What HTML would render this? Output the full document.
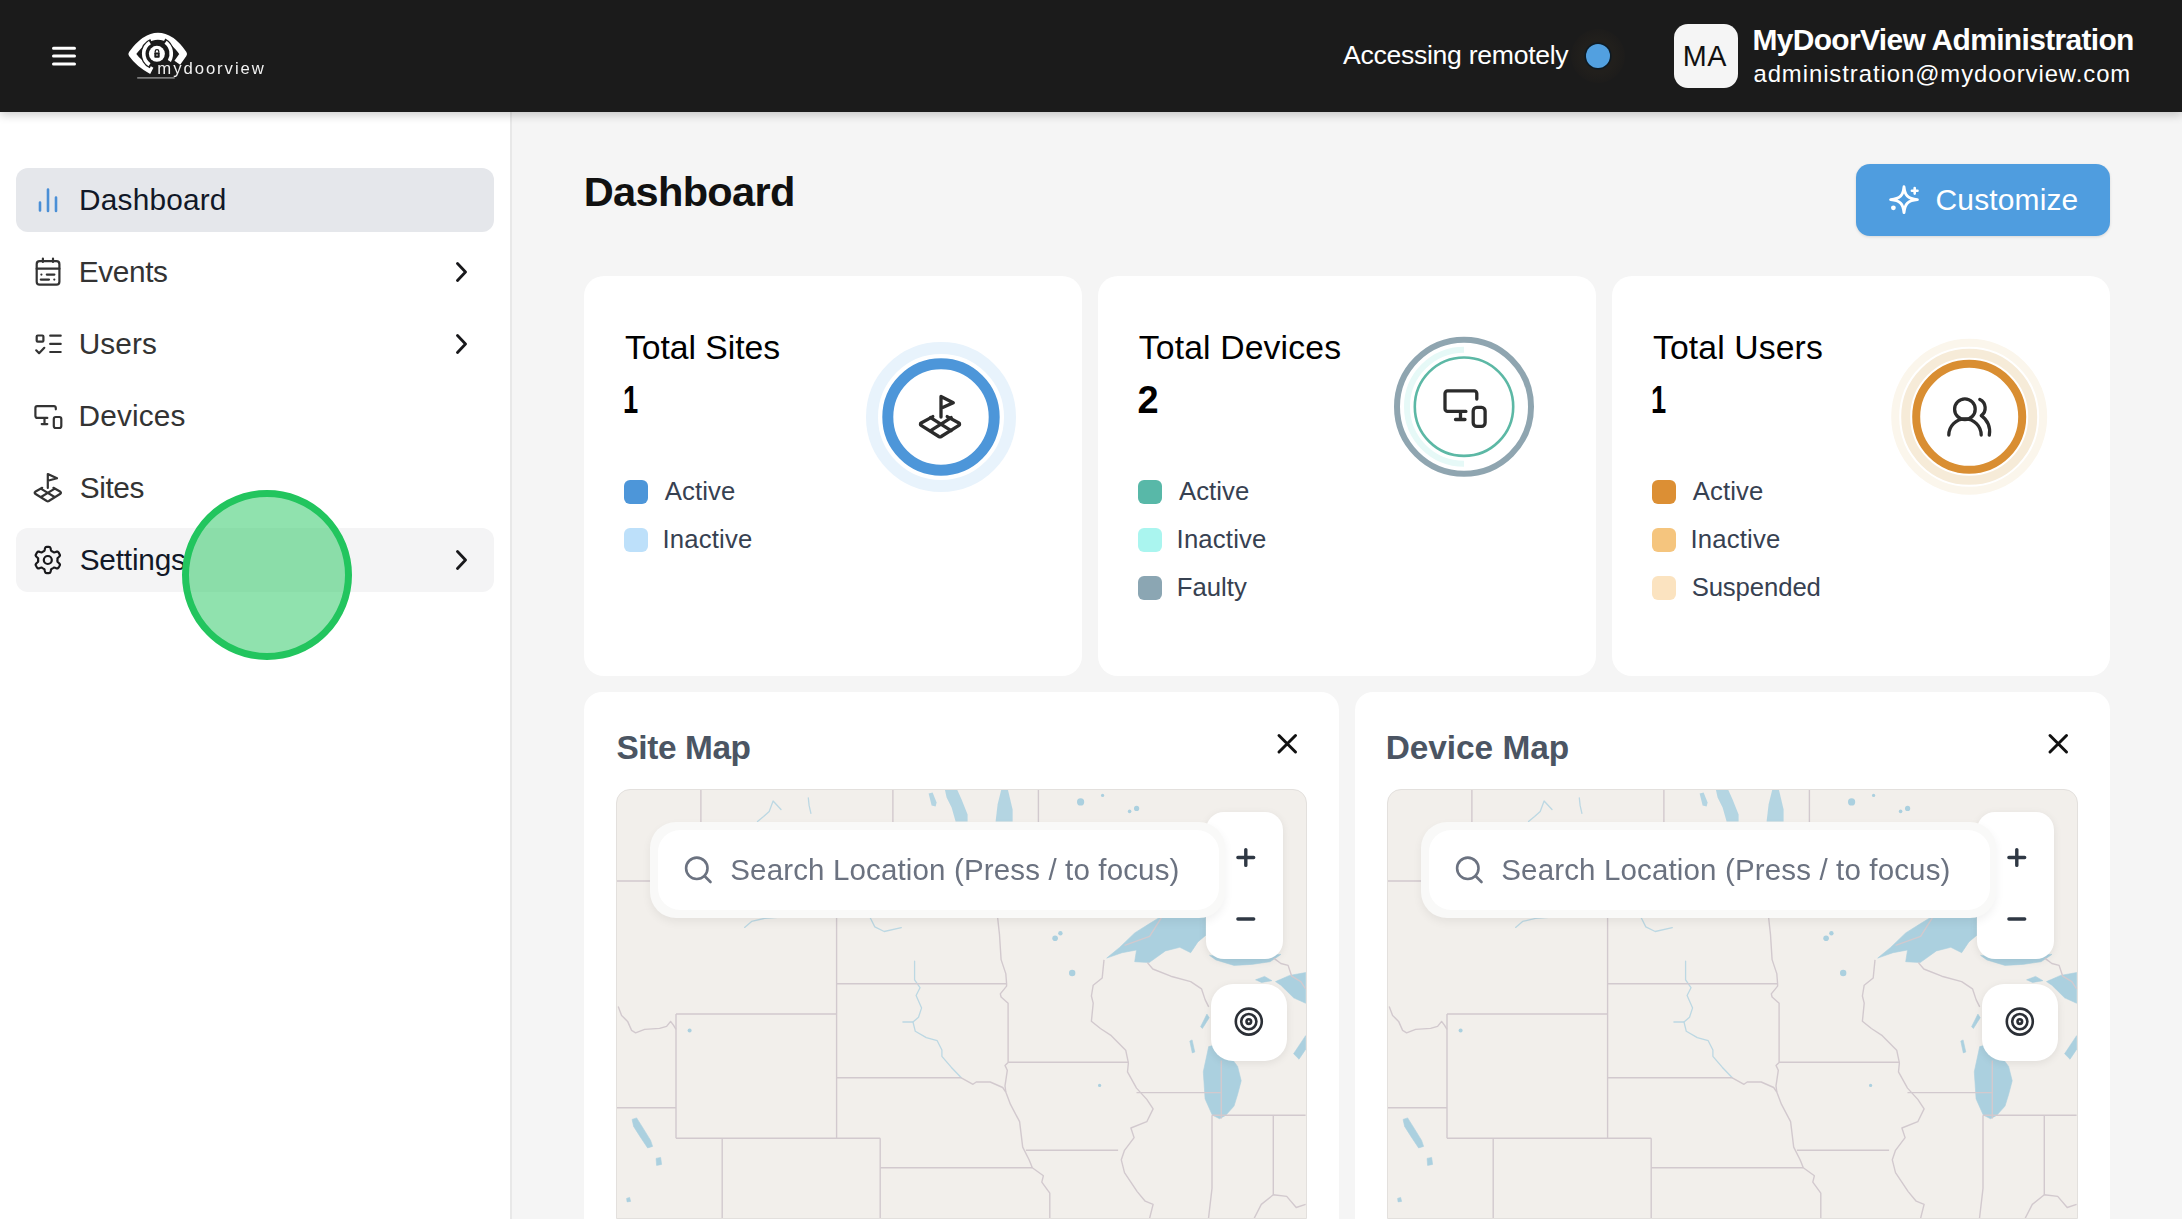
<!DOCTYPE html><html><head><meta charset="utf-8"><title>MyDoorView Dashboard</title><style>
*{margin:0;padding:0;box-sizing:border-box}
html,body{width:2182px;height:1219px;overflow:hidden;background:#f5f5f5;font-family:"Liberation Sans",sans-serif}
.t{position:absolute;white-space:nowrap;line-height:1}
.a{position:absolute}
svg.a{overflow:visible}
</style></head><body>
<div class="a" style="left:0;top:112px;width:512px;height:1107px;background:#fff;border-right:2px solid #e8e8e8"></div>
<div class="a" style="left:16px;top:168px;width:478px;height:64px;background:#e5e7eb;border-radius:12px"></div>
<div class="a" style="left:16px;top:528px;width:478px;height:64px;background:#f4f4f5;border-radius:12px"></div>
<div class="t" style="left:79.12px;top:184.77px;font-size:29.80px;color:#111827;letter-spacing:0.183px;">Dashboard</div>
<div class="t" style="left:78.82px;top:256.97px;font-size:29.80px;color:#333333;letter-spacing:-0.400px;">Events</div>
<div class="t" style="left:78.77px;top:328.57px;font-size:29.80px;color:#333333;letter-spacing:0.077px;">Users</div>
<div class="t" style="left:78.62px;top:400.57px;font-size:29.80px;color:#333333;letter-spacing:0.150px;">Devices</div>
<div class="t" style="left:79.66px;top:472.57px;font-size:29.80px;color:#333333;letter-spacing:-0.378px;">Sites</div>
<div class="t" style="left:79.66px;top:544.57px;font-size:29.80px;color:#111827;letter-spacing:-0.190px;">Settings</div>
<svg class="a" style="left:0;top:0" width="510" height="640" viewBox="0 0 510 640" fill="none" stroke-linecap="round" stroke-linejoin="round">
<g stroke="#4a8fd6" stroke-width="2.6"><path d="M40 202.5v8M48 189.5v21.5M56 197.5v13.5"/></g>
<g stroke="#333333" stroke-width="2.2">
<rect x="36.7" y="261.2" width="22.7" height="23.5" rx="3"/><path d="M42.9 258.6v3.4M53 258.6v3.4M36.7 268.7h22.7M41.4 274.6h.01M46.8 274.6h7.6M40.8 279.6h8.2M54.3 279.6h.01"/>
<rect x="36.7" y="335.5" width="6.7" height="6.2" rx="1"/><path d="M36.2 350.3l2.9 2.9l5.2-5.4M50.2 335.7h10.5M50.2 343.9h10.5M50.2 352h10.5"/>
<path d="M55.8 409.3v-1.4a1.8 1.8 0 0 0 -1.8 -1.8h-16.8a1.8 1.8 0 0 0 -1.8 1.8v8.2a1.8 1.8 0 0 0 1.8 1.8h10.1M44.5 417.9v6.2M41.7 424.1h5.6"/><rect x="53.8" y="417" width="7.5" height="11" rx="2"/>
<path d="M47.8 488v-14l9.2 4.3l-9.2 2.4M42.2 487.8l-7 4a1.2 1.2 0 0 0 0 2l11.6 7.2a2 2 0 0 0 2 0l11.6-7.2a1.2 1.2 0 0 0 0-2l-7-4M40.8 488.6l14.2 8.6M54.8 488.6l-14.2 8.6"/>
<path d="M57.50 560.00L57.49 560.42L57.46 560.85L57.42 561.27L57.53 561.71L58.04 562.27L58.81 562.95L59.54 563.70L59.95 564.42L59.90 565.01L59.67 565.54L59.42 566.05L59.14 566.55L58.85 567.04L58.53 567.51L58.19 567.97L57.70 568.31L56.88 568.32L55.86 568.06L54.89 567.73L54.15 567.56L53.70 567.70L53.36 567.95L53.01 568.18L52.65 568.40L52.28 568.60L51.90 568.79L51.51 568.96L51.18 569.28L50.95 570.00L50.75 571.01L50.46 572.02L50.04 572.73L49.51 572.99L48.94 573.05L48.37 573.09L47.80 573.10L47.23 573.09L46.66 573.05L46.09 572.99L45.56 572.73L45.14 572.02L44.85 571.01L44.65 570.00L44.42 569.28L44.09 568.96L43.70 568.79L43.32 568.60L42.95 568.40L42.59 568.18L42.24 567.95L41.90 567.70L41.45 567.56L40.71 567.73L39.74 568.06L38.72 568.32L37.90 568.31L37.41 567.97L37.07 567.51L36.75 567.04L36.46 566.55L36.18 566.05L35.93 565.54L35.70 565.01L35.65 564.42L36.06 563.70L36.79 562.95L37.56 562.27L38.07 561.71L38.18 561.27L38.14 560.85L38.11 560.42L38.10 560.00L38.11 559.58L38.14 559.15L38.18 558.73L38.07 558.29L37.56 557.73L36.79 557.05L36.06 556.30L35.65 555.58L35.70 554.99L35.93 554.46L36.18 553.95L36.46 553.45L36.75 552.96L37.07 552.49L37.41 552.03L37.90 551.69L38.72 551.68L39.74 551.94L40.71 552.27L41.45 552.44L41.90 552.30L42.24 552.05L42.59 551.82L42.95 551.60L43.32 551.40L43.70 551.21L44.09 551.04L44.42 550.72L44.65 550.00L44.85 548.99L45.14 547.98L45.56 547.27L46.09 547.01L46.66 546.95L47.23 546.91L47.80 546.90L48.37 546.91L48.94 546.95L49.51 547.01L50.04 547.27L50.46 547.98L50.75 548.99L50.95 550.00L51.18 550.72L51.51 551.04L51.90 551.21L52.28 551.40L52.65 551.60L53.01 551.82L53.36 552.05L53.70 552.30L54.15 552.44L54.89 552.27L55.86 551.94L56.88 551.68L57.70 551.69L58.19 552.03L58.53 552.49L58.85 552.96L59.14 553.45L59.42 553.95L59.67 554.46L59.90 554.99L59.95 555.58L59.54 556.30L58.81 557.05L58.04 557.73L57.53 558.29L57.42 558.73L57.46 559.15L57.49 559.58z" stroke="#18181b"/><circle cx="47.8" cy="560" r="4" stroke="#18181b"/>
</g>
<g stroke="#18181b" stroke-width="2.8"><path d="M457.5 263.5l8 8.5l-8 8.5M457.5 335.5l8 8.5l-8 8.5M457.5 551.5l8 8.5l-8 8.5"/></g>
</svg>
<div class="t" style="left:583.80px;top:171.10px;font-size:41.57px;color:#111;font-weight:700;letter-spacing:-0.699px;">Dashboard</div>
<div class="a" style="left:1856px;top:164px;width:254px;height:72px;border-radius:14px;background:#4f9ddf;box-shadow:0 1px 3px rgba(0,0,0,0.12)"></div>
<svg class="a" style="left:1880px;top:180px" width="44" height="40" viewBox="1880 180 44 40" fill="none" stroke="#fff" stroke-width="2.2" stroke-linecap="round" stroke-linejoin="round">
<path d="M1904 186.8C1904.9 195.2 1907.5 198.8 1917.4 199.6C1907.5 200.4 1904.9 204 1904 212.6C1903.1 204 1900.5 200.4 1890.6 199.6C1900.5 198.8 1903.1 195.2 1904 186.8z" stroke-width="2.9"/><path d="M1914.7 188v5.6M1911.9 190.8h5.6" stroke-width="2.6"/><circle cx="1893.4" cy="207.8" r="1.4" fill="#fff" stroke-width="2"/></svg>
<div class="t" style="left:1935.60px;top:184.85px;font-size:29.94px;color:#fff;letter-spacing:0.152px;">Customize</div>
<div class="a" style="left:584px;top:276px;width:498px;height:400px;border-radius:20px;background:#fff"></div>
<div class="a" style="left:1098px;top:276px;width:498px;height:400px;border-radius:20px;background:#fff"></div>
<div class="a" style="left:1612px;top:276px;width:498px;height:400px;border-radius:20px;background:#fff"></div>
<div class="t" style="left:624.93px;top:331.05px;font-size:33.72px;color:#000;letter-spacing:-0.027px;">Total Sites</div>
<div class="t" style="left:622.72px;top:382.18px;font-size:37.94px;color:#000;font-weight:700;transform:scaleX(0.72);transform-origin:0 0;">1</div>
<div class="t" style="left:1138.73px;top:331.05px;font-size:33.72px;color:#000;letter-spacing:0.149px;">Total Devices</div>
<div class="t" style="left:1137.57px;top:382.18px;font-size:37.94px;color:#000;font-weight:700;">2</div>
<div class="t" style="left:1652.93px;top:331.05px;font-size:33.72px;color:#000;letter-spacing:0.125px;">Total Users</div>
<div class="t" style="left:1650.72px;top:382.18px;font-size:37.94px;color:#000;font-weight:700;transform:scaleX(0.72);transform-origin:0 0;">1</div>
<div class="a" style="left:624px;top:480px;width:24px;height:24px;border-radius:6px;background:#4d96d9"></div>
<div class="t" style="left:664.80px;top:478.92px;font-size:25.73px;color:#374151;letter-spacing:0.090px;">Active</div>
<div class="a" style="left:624px;top:528px;width:24px;height:24px;border-radius:6px;background:#bde0fa"></div>
<div class="t" style="left:662.48px;top:526.92px;font-size:25.73px;color:#374151;letter-spacing:0.159px;">Inactive</div>
<div class="a" style="left:1138.3px;top:480px;width:24px;height:24px;border-radius:6px;background:#58b8a8"></div>
<div class="t" style="left:1178.90px;top:478.92px;font-size:25.73px;color:#374151;letter-spacing:0.090px;">Active</div>
<div class="a" style="left:1138.3px;top:528px;width:24px;height:24px;border-radius:6px;background:#aaf5ef"></div>
<div class="t" style="left:1176.58px;top:526.92px;font-size:25.73px;color:#374151;letter-spacing:0.159px;">Inactive</div>
<div class="a" style="left:1138.3px;top:576px;width:24px;height:24px;border-radius:6px;background:#8ba6b3"></div>
<div class="t" style="left:1176.84px;top:574.92px;font-size:25.73px;color:#374151;letter-spacing:-0.009px;">Faulty</div>
<div class="a" style="left:1652.2px;top:480px;width:24px;height:24px;border-radius:6px;background:#dc8f34"></div>
<div class="t" style="left:1692.80px;top:478.92px;font-size:25.73px;color:#374151;letter-spacing:0.090px;">Active</div>
<div class="a" style="left:1652.2px;top:528px;width:24px;height:24px;border-radius:6px;background:#f5c57e"></div>
<div class="t" style="left:1690.48px;top:526.92px;font-size:25.73px;color:#374151;letter-spacing:0.159px;">Inactive</div>
<div class="a" style="left:1652.2px;top:576px;width:24px;height:24px;border-radius:6px;background:#fbe3c0"></div>
<div class="t" style="left:1691.64px;top:574.92px;font-size:25.73px;color:#374151;letter-spacing:-0.110px;">Suspended</div>
<svg class="a" style="left:0;top:0" width="2182" height="700" viewBox="0 0 2182 700" fill="none" stroke-linecap="round" stroke-linejoin="round">
<circle cx="941" cy="417" r="69" stroke="#e8f3fc" stroke-width="12"/>
<circle cx="941" cy="417" r="53.2" stroke="#4d96d9" stroke-width="11"/>
<circle cx="1464" cy="406.7" r="67" stroke="#8fa5b0" stroke-width="6"/>
<path d="M1464 349.7a57 57 0 0 0 0 114" stroke="#e6f9f7" stroke-width="6" stroke-linecap="butt"/>
<circle cx="1464" cy="406.7" r="49.2" stroke="#5cb8a5" stroke-width="2.6"/>
<circle cx="1969.2" cy="416.8" r="74" stroke="#fbf6ec" stroke-width="8"/>
<circle cx="1969.2" cy="416.8" r="63.5" stroke="#f6ebd8" stroke-width="9"/>
<circle cx="1969.2" cy="416.8" r="53" stroke="#d98e32" stroke-width="8"/>
<g stroke="#2b2b2b" stroke-width="3.3">
<path d="M941 417v-20.5l12.3 6.2l-12.3 5.6"/>
<path d="M932.8 416.6l-11.7 6.4a1.4 1.4 0 0 0 0 2.4l17.7 11.1a2.4 2.4 0 0 0 2.4 0l17.7-11.1a1.4 1.4 0 0 0 0-2.4l-11.7-6.4"/>
<path d="M930.6 417.6l20.5 13M951.2 417.6l-20.5 13"/>
<path d="M1476.8 399v-5.5a2.6 2.6 0 0 0-2.6-2.6h-26.6a2.6 2.6 0 0 0-2.6 2.6v15.3a2.6 2.6 0 0 0 2.6 2.6h18.3M1460.5 411.4v8.1M1455.5 419.5h9.5"/>
<rect x="1473.2" y="407.3" width="11.9" height="19.1" rx="3.6"/>
<circle cx="1964.9" cy="409.2" r="10.3"/>
<path d="M1948.8 435a16.2 16.2 0 0 1 32.4 0"/>
<path d="M1979.8 399.5a9.5 9.5 0 0 1 1.5 16.2a19 19 0 0 1 8 19.5"/>
</g></svg>
<div class="a" style="left:584px;top:692px;width:755px;height:527px;border-radius:18px 18px 0 0;background:#fff"></div>
<div class="a" style="left:1355px;top:692px;width:755px;height:527px;border-radius:18px 18px 0 0;background:#fff"></div>
<div class="t" style="left:616.50px;top:730.69px;font-size:33.43px;color:#4b5563;font-weight:700;letter-spacing:-0.423px;">Site Map</div>
<div class="t" style="left:1385.63px;top:730.69px;font-size:33.43px;color:#4b5563;font-weight:700;letter-spacing:-0.040px;">Device Map</div>
<div class="a" style="left:616.4px;top:788.6px;width:690.6px;height:430.4px;border-radius:14px 14px 0 0;overflow:hidden;background:#f2efeb;border:1.5px solid #e3e0dd"><svg class="a" style="left:-1.5px;top:-1.5px" width="692" height="460" viewBox="616.4 788.6 692 460"><g fill="#abd0df" stroke="#abd0df" stroke-width="0.6" stroke-linejoin="round"><path d="M1107.1 958.7L1120.0 948.0L1135.1 933.5L1149.6 924.4L1160.0 918.0L1206.0 918.0L1206.0 936.0L1198.3 942.5L1191.1 953.3L1180.2 947.9L1165.8 951.5L1149.6 963.2L1135.1 962.3L1136.9 950.6L1122.5 953.3z"/><path d="M1210.0 956.0L1216.3 960.5L1234.4 966.0L1252.0 965.0L1270.5 962.3L1281.3 955.0L1270.0 955.0L1240.0 958.0z"/><path d="M1256.0 980.4L1265.0 977.0L1272.3 981.3L1262.0 983.0z"/><path d="M1275.9 982.2L1290.0 976.0L1306.0 973.2L1306.0 1003.8L1294.0 998.4L1281.3 985.8z"/><path d="M1306.0 1036.3L1294.0 1054.4L1299.4 1059.8L1306.0 1050.0z"/><path d="M1201.0 1027.3L1207.3 1014.7L1209.6 1018.3L1202.8 1029.1z"/><path d="M1190.2 1041.7L1192.5 1040.5L1195.2 1052.6L1192.7 1053.5z"/><path d="M1209.1 1047.2L1214.0 1046.0L1232.6 1059.8L1238.0 1067.0L1241.6 1081.4L1238.0 1095.0L1234.4 1106.7L1226.0 1116.0L1219.9 1119.3L1212.7 1115.7L1205.5 1099.5L1203.7 1072.4z"/><path d="M632.5 1120.0L637.0 1118.5L643.0 1128.0L651.0 1141.0L653.0 1147.0L648.0 1148.5L641.0 1138.0L634.0 1127.0z"/><path d="M656.5 1159.0L661.0 1158.0L662.0 1165.0L657.0 1166.0z"/><path d="M627.0 1199.0L630.0 1198.0L631.0 1202.0L627.5 1202.5z"/></g><g fill="#abd0df"><circle cx="1055.5" cy="938.8" r="2.8"/><circle cx="1060.8" cy="933.8" r="2.2"/><circle cx="1072.6" cy="973.6" r="3.2"/><circle cx="1081" cy="802.5" r="3.6"/><circle cx="1137" cy="809" r="2.6"/><circle cx="1130" cy="812" r="1.8"/><circle cx="1103" cy="796" r="1.6"/><circle cx="690" cy="1031" r="2"/><circle cx="1100" cy="1086" r="1.6"/></g><g fill="#b4d5e2" stroke="none"><path d="M929.0 794.0L933.0 793.0L937.0 803.0L936.0 807.0L932.0 806.0z"/><path d="M945.0 789.0L957.0 789.0L962.0 800.0L968.0 815.0L968.0 822.0L956.0 822.0L952.0 808.0L947.0 798.0z"/><path d="M1002.0 789.0L1008.0 789.0L1013.0 810.0L1013.0 822.0L996.0 822.0L998.0 805.0z"/></g><g fill="none" stroke="#bcd8e3" stroke-width="1.3" stroke-linecap="round" stroke-linejoin="round"><path d="M915.0 961.8L915.0 980.5L920.4 988.3L916.5 996.1L922.0 1008.5L918.9 1017.9L913.4 1022.6L915.7 1031.9L926.7 1038.2L937.6 1041.3L942.3 1050.6L942.3 1056.9L951.6 1067.8L961.7 1078.4"/><path d="M903.3 1022.6L913.4 1022.6"/><path d="M870.5 918.1L875.2 927.5L884.6 932.1L901.7 928.3"/><path d="M745.0 928.0L752.0 922.0L765.0 919.0L778.0 918.0"/><path d="M757.9 822.0L764.0 817.0L769.6 812.0L773.5 801.6L781.4 810.1"/><path d="M808.7 798.4L809.5 806.0L811.3 814.0"/></g><g fill="none" stroke="#d2c9ce" stroke-width="1.4" stroke-linejoin="round"><path d="M701.3 789.0L701.3 870.0"/><path d="M893.3 789.0L893.3 870.0"/><path d="M616.0 881.6L660.0 881.6"/><path d="M1038.8 789.0L1038.8 870.0"/><path d="M837.0 880.0L837.0 1138.8"/><path d="M676.4 1014.6L837.0 1014.6"/><path d="M676.4 1014.6L676.4 1138.8"/><path d="M676.4 1138.8L880.6 1138.8"/><path d="M618.6 1007.0L622.0 1016.0L628.0 1022.0L632.0 1031.0L636.0 1033.5L645.0 1030.0L660.0 1029.0L667.0 1027.0L671.0 1022.0L674.0 1026.0L676.4 1030.0"/><path d="M616.0 1108.3L676.4 1108.3"/><path d="M722.6 1138.8L722.6 1230.0"/><path d="M880.6 1138.8L880.6 1230.0"/><path d="M837.0 984.4L1007.0 984.4"/><path d="M837.0 1078.4L961.7 1078.4"/><path d="M880.6 1168.4L1032.7 1168.4"/><path d="M996.0 900.0L999.9 935.3L1001.5 960.2L1006.2 974.2L1007.0 984.4L1007.0 986.7L1000.7 994.5L1001.5 997.6L1008.5 1003.9L1008.5 1063.1L1005.4 1066.0L1007.7 1070.9L1005.4 1086.5L1006.2 1092.7"/><path d="M961.7 1078.4L973.4 1084.9L976.6 1082.6L990.6 1082.6L1003.1 1088.1L1006.2 1092.7"/><path d="M1006.2 1092.7L1010.9 1105.0L1020.0 1122.3L1023.1 1147.7L1029.5 1160.4L1032.7 1168.4L1043.8 1176.3L1042.2 1182.7L1050.2 1193.8L1050.2 1230.0"/><path d="M1026.3 1150.9L1118.5 1150.9"/><path d="M1008.5 1062.8L1128.8 1062.8"/><path d="M1104.4 960.5L1102.6 978.6L1093.6 985.8L1091.8 996.6L1093.6 1003.8L1091.8 1021.9L1100.8 1029.1L1111.7 1036.3L1126.1 1050.8L1128.8 1063.4L1127.9 1072.4L1136.9 1088.7L1147.2 1100.0L1153.5 1109.5L1147.2 1122.3L1131.3 1128.6L1134.5 1138.2L1124.9 1150.9L1121.7 1160.4L1124.9 1173.2L1137.6 1192.2L1145.6 1201.8L1153.5 1205.0L1147.2 1230.0"/><path d="M1136.9 1093.2L1221.7 1093.2"/><path d="M1212.4 1115.9L1212.4 1189.0L1207.6 1230.0"/><path d="M1212.4 1115.9L1306.0 1115.9"/><path d="M1273.7 1115.9L1273.7 1195.4"/><path d="M1248.9 1230.0L1261.7 1205.0L1273.7 1195.4L1287.1 1197.0L1296.6 1208.1L1306.0 1205.0"/><path d="M1147.8 963.2L1153.2 969.6L1171.2 976.8L1191.1 982.2L1201.9 989.4L1205.5 1000.2L1209.1 1007.5"/><path d="M1274.1 958.7L1281.3 964.1L1288.5 966.0L1292.1 976.8L1301.2 982.2L1306.0 989.4"/><path d="M1221.7 1061.0L1221.7 1119.0"/><path d="M1125.0 946.0L1150.0 937.0L1162.0 918.0"/></g></svg></div>
<div class="a" style="left:650px;top:822px;width:575px;height:96px;border-radius:26px;background:#f9f9f8;box-shadow:0 4px 10px rgba(0,0,0,0.06);z-index:2"></div>
<div class="a" style="left:657.6px;top:830px;width:561px;height:80px;border-radius:22px;background:#fff;z-index:2"></div>
<svg class="a" style="left:0px;top:0;z-index:3" width="1400" height="1219" viewBox="0 0 1400 1219" fill="none" stroke="#6b7280" stroke-width="2.6" stroke-linecap="round"><circle cx="696.8" cy="868.3" r="10.7"/><path d="M704.5 876l6 6"/></svg>
<div class="t" style="left:730.27px;top:854.82px;font-size:29.51px;color:#6b7280;letter-spacing:0.144px;z-index:3;">Search Location (Press / to focus)</div>
<div class="a" style="left:1205.6px;top:812px;width:77.4px;height:147px;border-radius:18px;background:#fff;box-shadow:0 2px 8px rgba(0,0,0,0.08);z-index:1"></div>
<div class="a" style="left:1210.9px;top:983.7px;width:76.2px;height:77px;border-radius:22px;background:#fff;box-shadow:0 2px 8px rgba(0,0,0,0.08);z-index:1"></div>
<svg class="a" style="left:0px;top:0;z-index:3" width="1400" height="1219" viewBox="0 0 1400 1219" fill="none" stroke-linecap="round">
<g stroke="#2f3844" stroke-width="3.4"><path d="M1245.8 849.6v15.8M1237.9 857.5h15.8M1237.9 919h15.8"/></g>
<g stroke="#2b2f36" stroke-width="2.6"><circle cx="1248.8" cy="1021.6" r="13"/><circle cx="1248.8" cy="1021.6" r="7.6"/><circle cx="1248.8" cy="1021.6" r="2.3"/></g>
<g stroke="#111" stroke-width="3"><path d="M1279 735.5l16.5 16.5M1295.5 735.5l-16.5 16.5"/></g>
</svg>
<div class="a" style="left:1387.4px;top:788.6px;width:690.6px;height:430.4px;border-radius:14px 14px 0 0;overflow:hidden;background:#f2efeb;border:1.5px solid #e3e0dd"><svg class="a" style="left:-1.5px;top:-1.5px" width="692" height="460" viewBox="616.4 788.6 692 460"><g fill="#abd0df" stroke="#abd0df" stroke-width="0.6" stroke-linejoin="round"><path d="M1107.1 958.7L1120.0 948.0L1135.1 933.5L1149.6 924.4L1160.0 918.0L1206.0 918.0L1206.0 936.0L1198.3 942.5L1191.1 953.3L1180.2 947.9L1165.8 951.5L1149.6 963.2L1135.1 962.3L1136.9 950.6L1122.5 953.3z"/><path d="M1210.0 956.0L1216.3 960.5L1234.4 966.0L1252.0 965.0L1270.5 962.3L1281.3 955.0L1270.0 955.0L1240.0 958.0z"/><path d="M1256.0 980.4L1265.0 977.0L1272.3 981.3L1262.0 983.0z"/><path d="M1275.9 982.2L1290.0 976.0L1306.0 973.2L1306.0 1003.8L1294.0 998.4L1281.3 985.8z"/><path d="M1306.0 1036.3L1294.0 1054.4L1299.4 1059.8L1306.0 1050.0z"/><path d="M1201.0 1027.3L1207.3 1014.7L1209.6 1018.3L1202.8 1029.1z"/><path d="M1190.2 1041.7L1192.5 1040.5L1195.2 1052.6L1192.7 1053.5z"/><path d="M1209.1 1047.2L1214.0 1046.0L1232.6 1059.8L1238.0 1067.0L1241.6 1081.4L1238.0 1095.0L1234.4 1106.7L1226.0 1116.0L1219.9 1119.3L1212.7 1115.7L1205.5 1099.5L1203.7 1072.4z"/><path d="M632.5 1120.0L637.0 1118.5L643.0 1128.0L651.0 1141.0L653.0 1147.0L648.0 1148.5L641.0 1138.0L634.0 1127.0z"/><path d="M656.5 1159.0L661.0 1158.0L662.0 1165.0L657.0 1166.0z"/><path d="M627.0 1199.0L630.0 1198.0L631.0 1202.0L627.5 1202.5z"/></g><g fill="#abd0df"><circle cx="1055.5" cy="938.8" r="2.8"/><circle cx="1060.8" cy="933.8" r="2.2"/><circle cx="1072.6" cy="973.6" r="3.2"/><circle cx="1081" cy="802.5" r="3.6"/><circle cx="1137" cy="809" r="2.6"/><circle cx="1130" cy="812" r="1.8"/><circle cx="1103" cy="796" r="1.6"/><circle cx="690" cy="1031" r="2"/><circle cx="1100" cy="1086" r="1.6"/></g><g fill="#b4d5e2" stroke="none"><path d="M929.0 794.0L933.0 793.0L937.0 803.0L936.0 807.0L932.0 806.0z"/><path d="M945.0 789.0L957.0 789.0L962.0 800.0L968.0 815.0L968.0 822.0L956.0 822.0L952.0 808.0L947.0 798.0z"/><path d="M1002.0 789.0L1008.0 789.0L1013.0 810.0L1013.0 822.0L996.0 822.0L998.0 805.0z"/></g><g fill="none" stroke="#bcd8e3" stroke-width="1.3" stroke-linecap="round" stroke-linejoin="round"><path d="M915.0 961.8L915.0 980.5L920.4 988.3L916.5 996.1L922.0 1008.5L918.9 1017.9L913.4 1022.6L915.7 1031.9L926.7 1038.2L937.6 1041.3L942.3 1050.6L942.3 1056.9L951.6 1067.8L961.7 1078.4"/><path d="M903.3 1022.6L913.4 1022.6"/><path d="M870.5 918.1L875.2 927.5L884.6 932.1L901.7 928.3"/><path d="M745.0 928.0L752.0 922.0L765.0 919.0L778.0 918.0"/><path d="M757.9 822.0L764.0 817.0L769.6 812.0L773.5 801.6L781.4 810.1"/><path d="M808.7 798.4L809.5 806.0L811.3 814.0"/></g><g fill="none" stroke="#d2c9ce" stroke-width="1.4" stroke-linejoin="round"><path d="M701.3 789.0L701.3 870.0"/><path d="M893.3 789.0L893.3 870.0"/><path d="M616.0 881.6L660.0 881.6"/><path d="M1038.8 789.0L1038.8 870.0"/><path d="M837.0 880.0L837.0 1138.8"/><path d="M676.4 1014.6L837.0 1014.6"/><path d="M676.4 1014.6L676.4 1138.8"/><path d="M676.4 1138.8L880.6 1138.8"/><path d="M618.6 1007.0L622.0 1016.0L628.0 1022.0L632.0 1031.0L636.0 1033.5L645.0 1030.0L660.0 1029.0L667.0 1027.0L671.0 1022.0L674.0 1026.0L676.4 1030.0"/><path d="M616.0 1108.3L676.4 1108.3"/><path d="M722.6 1138.8L722.6 1230.0"/><path d="M880.6 1138.8L880.6 1230.0"/><path d="M837.0 984.4L1007.0 984.4"/><path d="M837.0 1078.4L961.7 1078.4"/><path d="M880.6 1168.4L1032.7 1168.4"/><path d="M996.0 900.0L999.9 935.3L1001.5 960.2L1006.2 974.2L1007.0 984.4L1007.0 986.7L1000.7 994.5L1001.5 997.6L1008.5 1003.9L1008.5 1063.1L1005.4 1066.0L1007.7 1070.9L1005.4 1086.5L1006.2 1092.7"/><path d="M961.7 1078.4L973.4 1084.9L976.6 1082.6L990.6 1082.6L1003.1 1088.1L1006.2 1092.7"/><path d="M1006.2 1092.7L1010.9 1105.0L1020.0 1122.3L1023.1 1147.7L1029.5 1160.4L1032.7 1168.4L1043.8 1176.3L1042.2 1182.7L1050.2 1193.8L1050.2 1230.0"/><path d="M1026.3 1150.9L1118.5 1150.9"/><path d="M1008.5 1062.8L1128.8 1062.8"/><path d="M1104.4 960.5L1102.6 978.6L1093.6 985.8L1091.8 996.6L1093.6 1003.8L1091.8 1021.9L1100.8 1029.1L1111.7 1036.3L1126.1 1050.8L1128.8 1063.4L1127.9 1072.4L1136.9 1088.7L1147.2 1100.0L1153.5 1109.5L1147.2 1122.3L1131.3 1128.6L1134.5 1138.2L1124.9 1150.9L1121.7 1160.4L1124.9 1173.2L1137.6 1192.2L1145.6 1201.8L1153.5 1205.0L1147.2 1230.0"/><path d="M1136.9 1093.2L1221.7 1093.2"/><path d="M1212.4 1115.9L1212.4 1189.0L1207.6 1230.0"/><path d="M1212.4 1115.9L1306.0 1115.9"/><path d="M1273.7 1115.9L1273.7 1195.4"/><path d="M1248.9 1230.0L1261.7 1205.0L1273.7 1195.4L1287.1 1197.0L1296.6 1208.1L1306.0 1205.0"/><path d="M1147.8 963.2L1153.2 969.6L1171.2 976.8L1191.1 982.2L1201.9 989.4L1205.5 1000.2L1209.1 1007.5"/><path d="M1274.1 958.7L1281.3 964.1L1288.5 966.0L1292.1 976.8L1301.2 982.2L1306.0 989.4"/><path d="M1221.7 1061.0L1221.7 1119.0"/><path d="M1125.0 946.0L1150.0 937.0L1162.0 918.0"/></g></svg></div>
<div class="a" style="left:1421px;top:822px;width:575px;height:96px;border-radius:26px;background:#f9f9f8;box-shadow:0 4px 10px rgba(0,0,0,0.06);z-index:2"></div>
<div class="a" style="left:1428.6px;top:830px;width:561px;height:80px;border-radius:22px;background:#fff;z-index:2"></div>
<svg class="a" style="left:771px;top:0;z-index:3" width="1400" height="1219" viewBox="0 0 1400 1219" fill="none" stroke="#6b7280" stroke-width="2.6" stroke-linecap="round"><circle cx="696.8" cy="868.3" r="10.7"/><path d="M704.5 876l6 6"/></svg>
<div class="t" style="left:1501.27px;top:854.82px;font-size:29.51px;color:#6b7280;letter-spacing:0.144px;z-index:3;">Search Location (Press / to focus)</div>
<div class="a" style="left:1976.6px;top:812px;width:77.4px;height:147px;border-radius:18px;background:#fff;box-shadow:0 2px 8px rgba(0,0,0,0.08);z-index:1"></div>
<div class="a" style="left:1981.9px;top:983.7px;width:76.2px;height:77px;border-radius:22px;background:#fff;box-shadow:0 2px 8px rgba(0,0,0,0.08);z-index:1"></div>
<svg class="a" style="left:771px;top:0;z-index:3" width="1400" height="1219" viewBox="0 0 1400 1219" fill="none" stroke-linecap="round">
<g stroke="#2f3844" stroke-width="3.4"><path d="M1245.8 849.6v15.8M1237.9 857.5h15.8M1237.9 919h15.8"/></g>
<g stroke="#2b2f36" stroke-width="2.6"><circle cx="1248.8" cy="1021.6" r="13"/><circle cx="1248.8" cy="1021.6" r="7.6"/><circle cx="1248.8" cy="1021.6" r="2.3"/></g>
<g stroke="#111" stroke-width="3"><path d="M1279 735.5l16.5 16.5M1295.5 735.5l-16.5 16.5"/></g>
</svg>
<div class="a" style="left:0;top:0;width:2182px;height:112px;background:#1b1b1b;box-shadow:0 3px 9px rgba(0,0,0,0.2)"></div>
<svg class="a" style="left:0;top:0" width="300" height="112" viewBox="0 0 300 112"><g stroke="#fff" stroke-width="3" stroke-linecap="round"><path d="M53.5 48.2h21M53.5 56h21M53.5 63.9h21"/></g></svg>
<svg class="a" style="left:0;top:0" width="300" height="112" viewBox="0 0 300 112" fill="none">
<path d="M151.8 70.8C143.5 66.5 136.5 60.5 131.9 54C140 43 148 36.3 157.9 36.3C168 36.3 176 43 183.5 54L177.3 62.8" stroke="#fff" stroke-width="7" stroke-linejoin="round"/>
<path d="M151.53 41.74A13.2 13.2 0 0 0 151.11 65.66" stroke="#1b1b1b" stroke-width="6"/>
<path d="M163.88 41.21A14.4 14.4 0 0 1 168.25 62.67" stroke="#1b1b1b" stroke-width="6"/>
<path d="M149.91 42.61A13.2 13.2 0 0 0 149.52 64.74" stroke="#fff" stroke-width="3.6"/>
<path d="M165.57 42.30A14.4 14.4 0 0 1 169.37 61.00" stroke="#fff" stroke-width="3.6"/>
<circle cx="156.9" cy="53.8" r="8" fill="#fff"/>
<path d="M155.2 52.8v-1.3a1.8 1.8 0 0 1 3.6 0v1.3" stroke="#1b1b1b" stroke-width="1.3"/>
<rect x="154.3" y="52.4" width="5.4" height="5.3" rx="0.9" fill="#1b1b1b"/>
<path d="M157 54.2v1.8" stroke="#fff" stroke-width="0.9"/>
<path d="M137.2 77.8H174.7" stroke="#7a7a7a" stroke-width="1.8"/>
</svg>\n<div class="t" style="left:157.31px;top:60.56px;font-size:16.70px;color:#f2f2f2;letter-spacing:1.945px;transform:translateZ(0);">mydoorview</div>
<div class="t" style="left:1343.00px;top:42.18px;font-size:26.60px;color:#fff;letter-spacing:-0.289px;">Accessing remotely</div>
<div class="a" style="left:1571px;top:29px;width:54px;height:54px;border-radius:50%;background:radial-gradient(circle,#211f1c 0,#211f1c 45%,#1d1c1b 70%,rgba(27,27,27,0) 100%)"></div>
<div class="a" style="left:1586px;top:44px;width:24px;height:24px;border-radius:50%;background:#52a0e0;box-shadow:0 0 0 1.5px #0c1a24"></div>
<div class="a" style="left:1674px;top:24px;width:64px;height:64px;border-radius:14px;background:#f5f5f5"></div>
<div class="t" style="left:1682.70px;top:41.83px;font-size:28.78px;color:#111;letter-spacing:0.634px;">MA</div>
<div class="t" style="left:1752.45px;top:24.85px;font-size:29.94px;color:#fff;font-weight:700;letter-spacing:-0.649px;">MyDoorView Administration</div>
<div class="t" style="left:1753.45px;top:61.80px;font-size:23.86px;color:#fff;letter-spacing:0.942px;">administration@mydoorview.com</div>
<div class="a" style="left:181.5px;top:490px;width:170px;height:170px;border-radius:50%;background:rgba(34,197,94,0.5);border:7px solid #22c55e;z-index:10"></div>
</body></html>
